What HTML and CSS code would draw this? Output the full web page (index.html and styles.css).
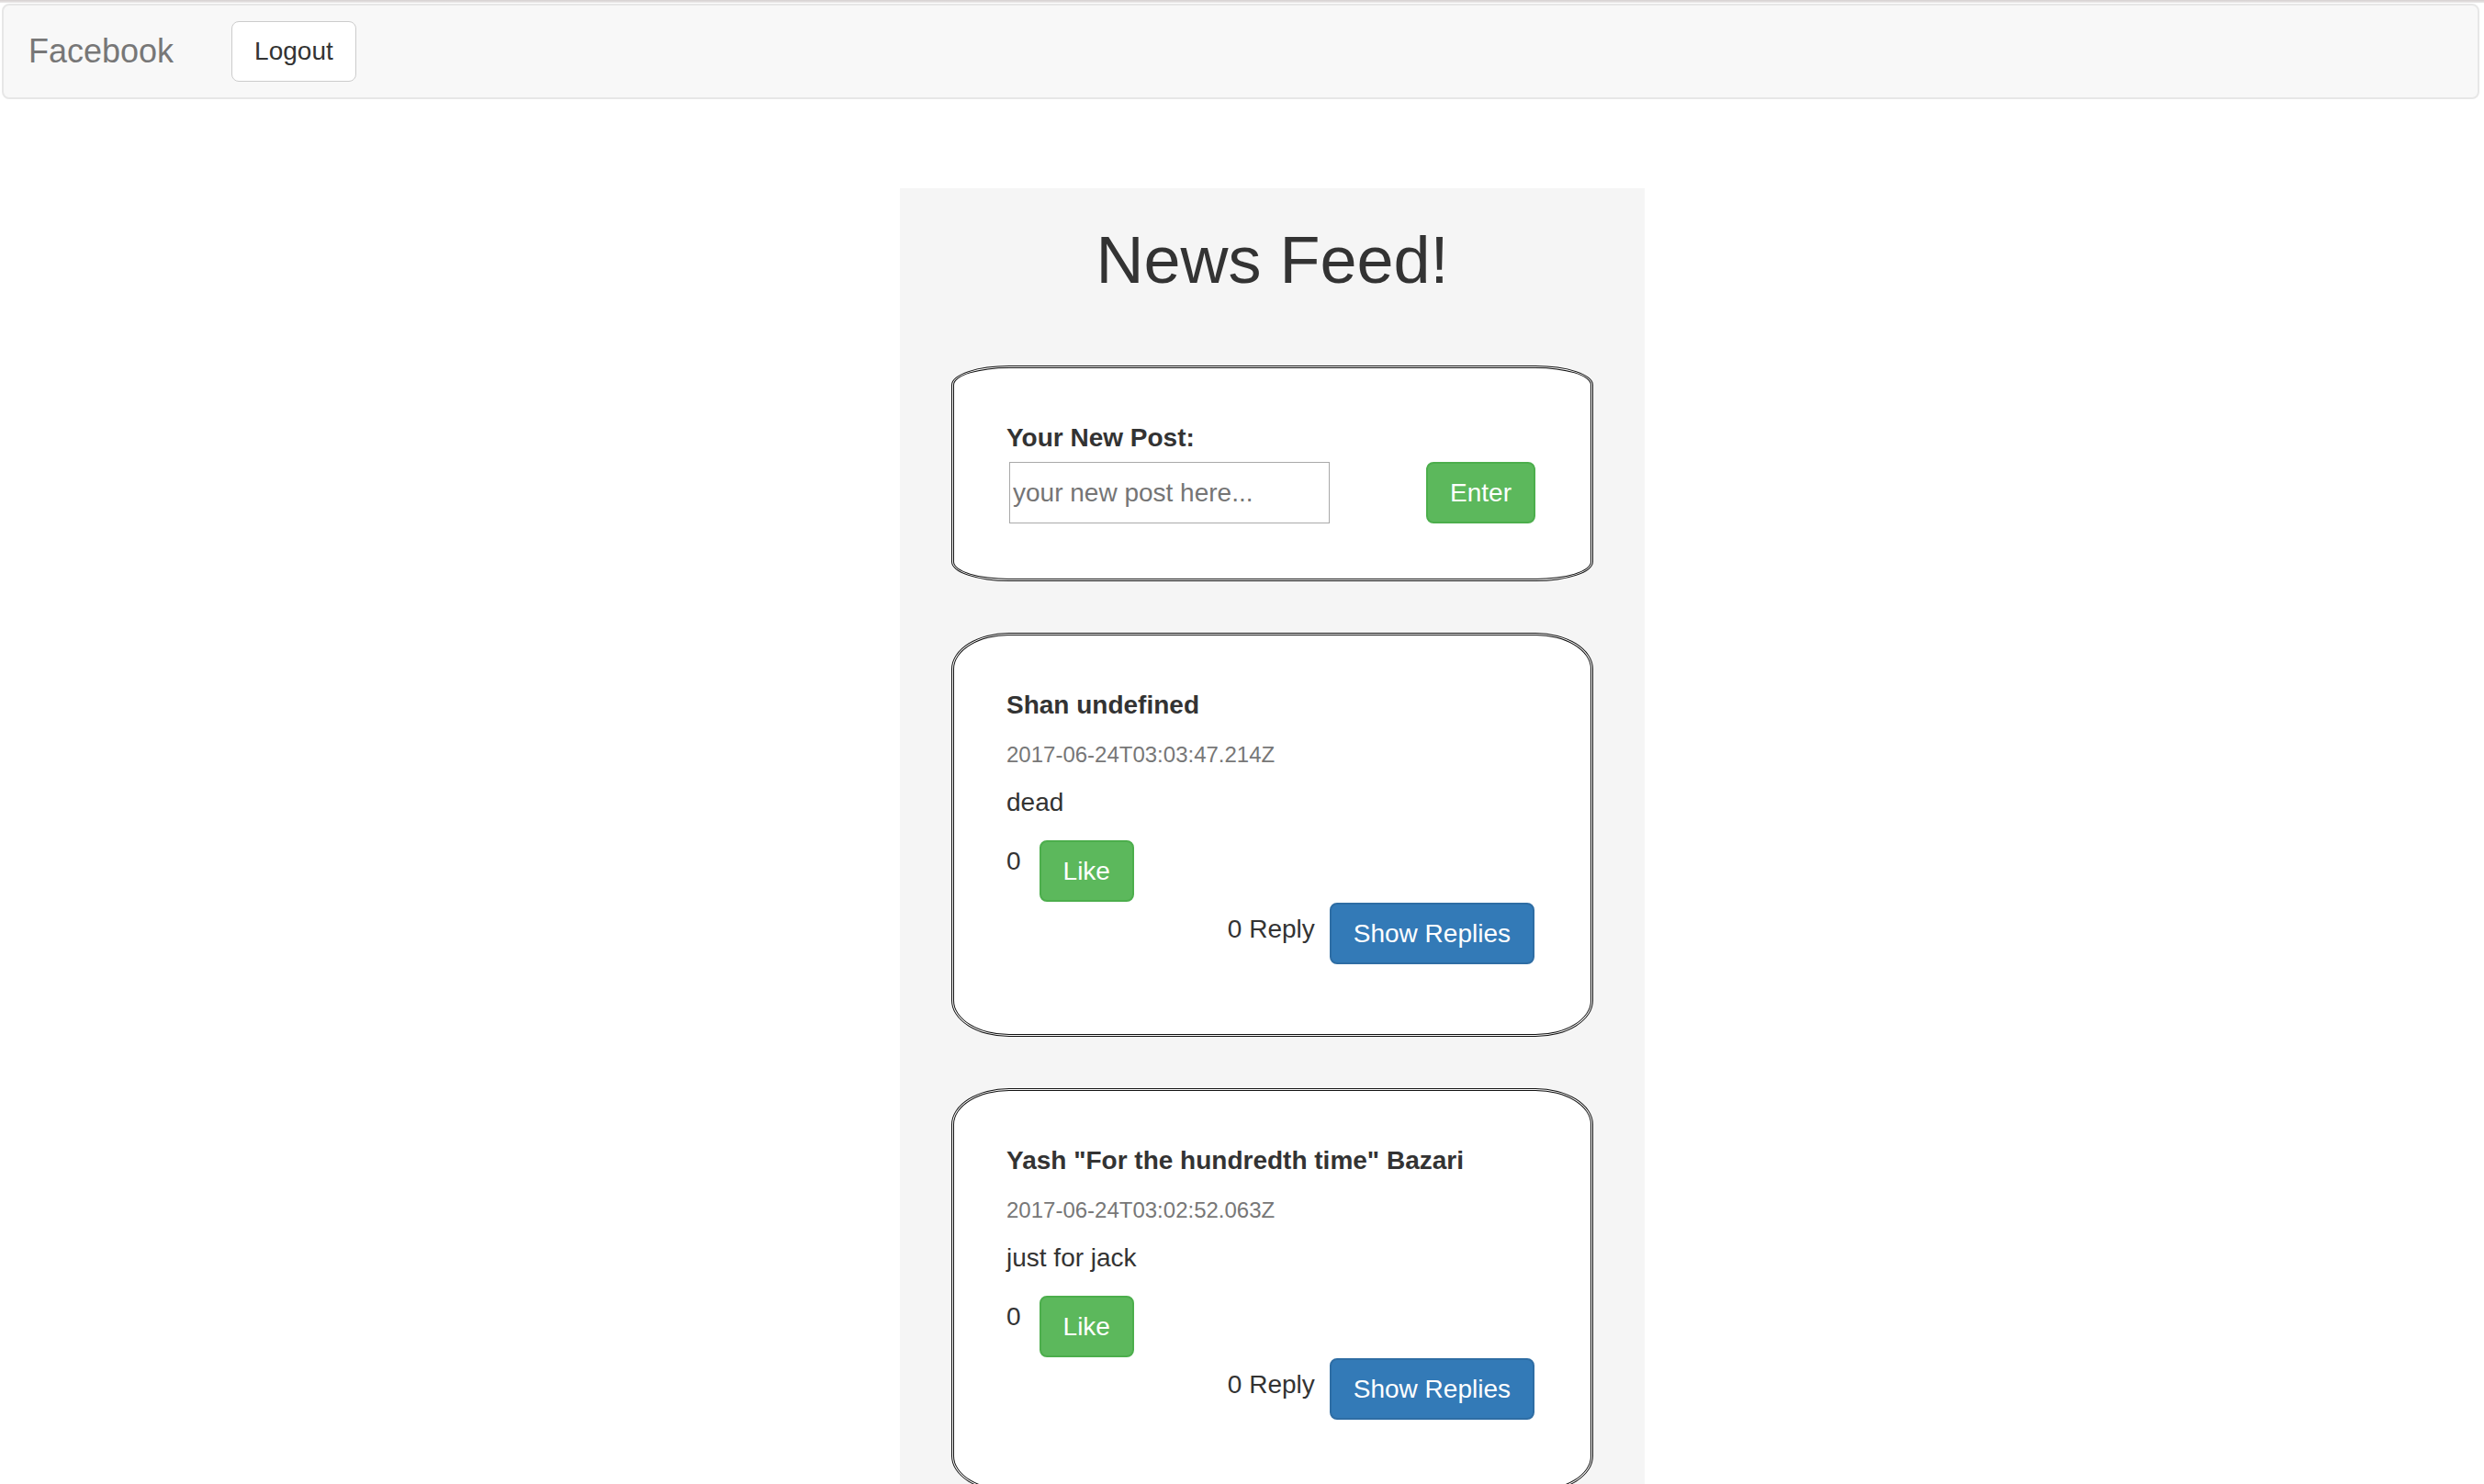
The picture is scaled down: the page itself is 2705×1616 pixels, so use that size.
FILE: index.html
```html
<!DOCTYPE html>
<html lang="en">
<head>
<meta charset="utf-8">
<title>News Feed</title>
<link rel="stylesheet" href="styles.css">
</head>
<body>
<div class="topline"></div>
<nav class="navbar">
  <span class="brand">Facebook</span>
  <button class="btn btn-default">Logout</button>
</nav>

<main class="feed">
  <h1 class="feed-title">News Feed!</h1>

  <section class="card card-new">
    <label class="new-label" for="newpost">Your New Post:</label>
    <div class="new-row">
      <input id="newpost" class="new-input" type="text" placeholder="your new post here...">
      <button class="btn btn-success">Enter</button>
    </div>
  </section>

  <section class="card card-post">
    <div class="post-name">Shan undefined</div>
    <div class="post-time">2017-06-24T03:03:47.214Z</div>
    <div class="post-body">dead</div>
    <div class="like-row">
      <span class="like-count">0</span>
      <button class="btn btn-success">Like</button>
    </div>
    <div class="reply-row">
      <span class="reply-count">0 Reply</span>
      <button class="btn btn-primary">Show Replies</button>
    </div>
  </section>

  <section class="card card-post">
    <div class="post-name">Yash "For the hundredth time" Bazari</div>
    <div class="post-time">2017-06-24T03:02:52.063Z</div>
    <div class="post-body">just for jack</div>
    <div class="like-row">
      <span class="like-count">0</span>
      <button class="btn btn-success">Like</button>
    </div>
    <div class="reply-row">
      <span class="reply-count">0 Reply</span>
      <button class="btn btn-primary">Show Replies</button>
    </div>
  </section>
</main>
</body>
</html>
```

FILE: styles.css
```css
html, body {
  height: 100%;
  overflow: hidden;
}

body {
  margin: 0;
  background: #ffffff;
  font-family: "Liberation Sans", Arial, sans-serif;
  font-size: 28px;
  line-height: 40px;
  color: #333333;
}

.topline {
  height: 3px;
  background: linear-gradient(#d6d1d1, #ebe9e9);
}

.navbar {
  box-sizing: border-box;
  height: 104px;
  margin: 1px 5px 0 2px;
  display: flex;
  align-items: center;
  background: #f8f8f8;
  border: 2px solid #e7e7e7;
  border-radius: 8px;
}

.brand {
  padding: 0 30px 0 27px;
  font-size: 36px;
  line-height: 40px;
  color: #777777;
}

.btn {
  font-family: "Liberation Sans", Arial, sans-serif;
  font-size: 28px;
  line-height: 39px;
  padding: 12px 24px;
  border: 2px solid transparent;
  border-radius: 8px;
  cursor: pointer;
  white-space: nowrap;
}

.btn-default {
  margin-left: 33px;
  line-height: 40px;
  border: 1px solid #cccccc;
  background: #ffffff;
  color: #333333;
}

.btn-success {
  background: #5cb85c;
  border-color: #4cae4c;
  color: #ffffff;
}

.btn-primary {
  background: #337ab7;
  border-color: #2e6da4;
  color: #ffffff;
}

.feed {
  box-sizing: border-box;
  width: 811px;
  margin: 97px 0 0 980px;
  padding: 39px 56px 40px;
  background: #f5f5f5;
  min-height: 1600px;
}

.feed-title {
  margin: 0 0 75px;
  font-size: 72px;
  line-height: 1.1;
  font-weight: 500;
  text-align: center;
  color: #333333;
}

.card {
  background: #ffffff;
  border: 3px double #111111;
  border-radius: 9%;
  padding: 56px 61px 76px 57px;
  margin-bottom: 56px;
}

.card-new {
  padding-right: 60px;
  padding-bottom: 60px;
}

.new-label {
  display: block;
  font-weight: bold;
  margin-bottom: 6px;
}

.new-row {
  display: flex;
  justify-content: space-between;
  align-items: flex-start;
}

.new-input {
  box-sizing: border-box;
  width: 349px;
  height: 67px;
  margin: 0 0 0 3px;
  padding: 0 3px;
  border: 1px solid #a9a9a9;
  font-family: "Liberation Sans", Arial, sans-serif;
  font-size: 28px;
  color: #333333;
}

.new-input::placeholder {
  color: #757575;
}

.post-name {
  font-weight: bold;
  margin-bottom: 17px;
}

.post-time {
  font-size: 24px;
  line-height: 34px;
  color: #777777;
  margin-bottom: 15px;
}

.post-body {
  margin-bottom: 21px;
}

.like-row {
  display: flex;
  align-items: flex-start;
}

.like-count {
  margin-top: 3px;
  margin-right: 20px;
}

.reply-row {
  display: flex;
  justify-content: flex-end;
  align-items: flex-start;
  margin-top: 1px;
}

.reply-count {
  margin-top: 9px;
  margin-right: 16px;
}
```
